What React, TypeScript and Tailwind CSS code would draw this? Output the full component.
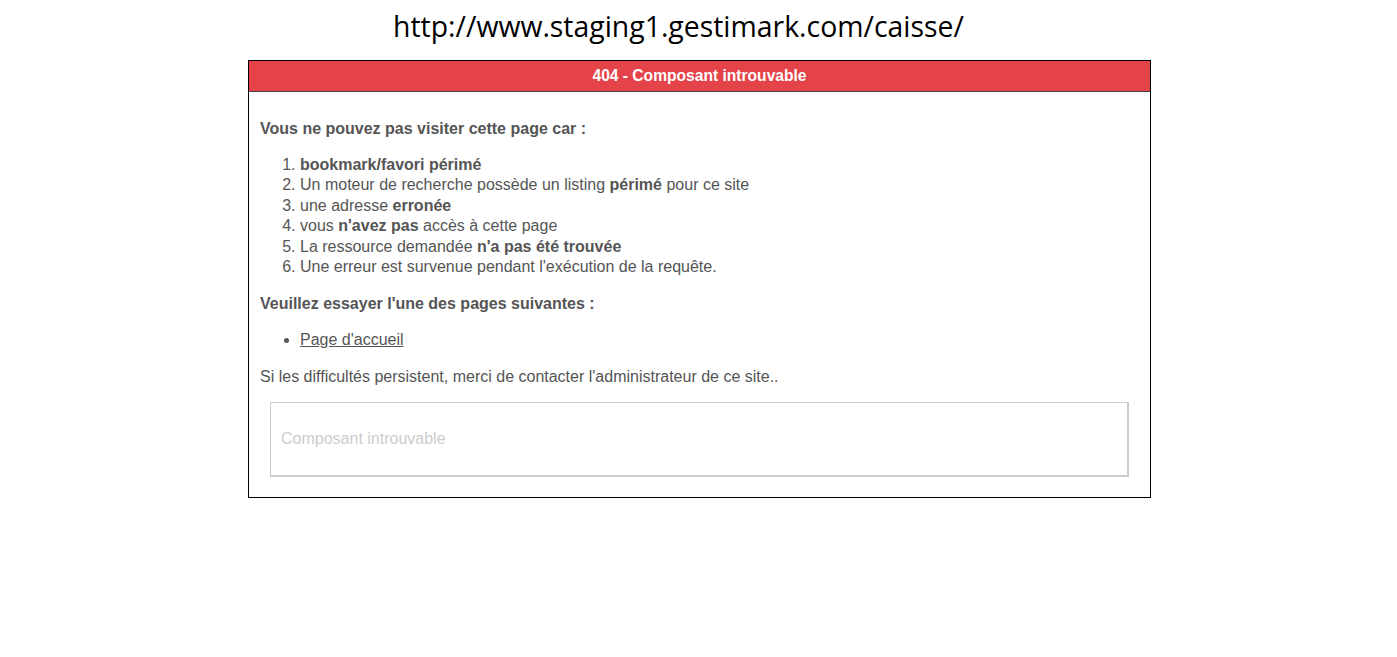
export default function App() {
  return (
    <div className="w-[1397px] h-[657px] bg-white" style={{ fontFamily: '"Liberation Sans", Arial, sans-serif' }}>
      <div className="h-[60px] flex justify-center pt-[6px] pr-[40px]">
        <div className="text-[28.4px] leading-[40px] text-black" style={{ fontFamily: '"Open Sans", "Noto Sans", sans-serif' }}>
          http://www.staging1.gestimark.com/caisse/
        </div>
      </div>
      <div className="ml-[248px] w-[903px] border border-black">
        <div className="h-[31px] bg-[#e4434a] border-b border-[#444] flex items-center justify-center text-white font-bold text-[15.6px]">
          404 - Composant introuvable
        </div>
        <div className="px-[11px] pt-[27px] pb-[20px] text-[#555] text-[16px] leading-[20.5px]">
          <p className="font-bold">Vous ne pouvez pas visiter cette page car :</p>
          <ol className="list-decimal pl-[40px] mt-[15px] marker:text-[#555]">
            <li><b>bookmark/favori périmé</b></li>
            <li>Un moteur de recherche possède un listing <b>périmé</b> pour ce site</li>
            <li>une adresse <b>erronée</b></li>
            <li>vous <b>n'avez pas</b> accès à cette page</li>
            <li>La ressource demandée <b>n'a pas été trouvée</b></li>
            <li>Une erreur est survenue pendant l'exécution de la requête.</li>
          </ol>
          <p className="font-bold mt-[16px]">Veuillez essayer l'une des pages suivantes :</p>
          <ul className="list-disc pl-[40px] mt-[16px]">
            <li><a className="underline text-[#555]" href="#">Page d'accueil</a></li>
          </ul>
          <p className="mt-[16px]">Si les difficultés persistent, merci de contacter l'administrateur de ce site..</p>
          <div className="mx-[10px] mt-[15px] h-[75px] border border-[#ccc] border-r-2 border-b-2 flex items-center px-[10px] text-[#ccc]">
            Composant introuvable
          </div>
        </div>
      </div>
    </div>
  );
}
